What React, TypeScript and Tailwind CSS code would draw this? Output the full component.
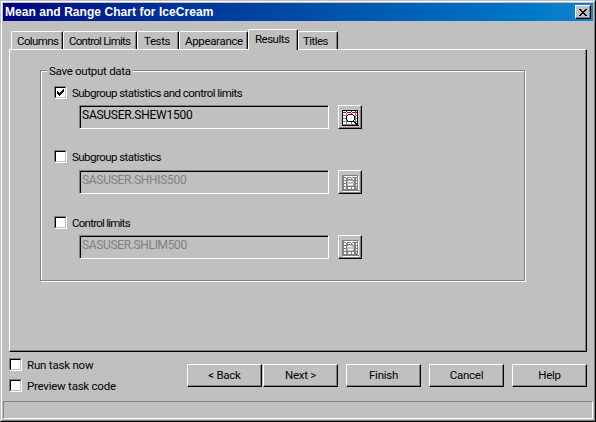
import React from "react";

const raised =
  "border border-t-white border-l-white border-r-black border-b-black shadow-[inset_-1px_-1px_0_#808080]";

function CheckMark() {
  return (
    <svg width="7" height="7" viewBox="0 0 7 7" shapeRendering="crispEdges">
      <path d="M0 2h1v3H0zM1 3h1v3H1zM2 4h1v3H2zM3 3h1v3H3zM4 2h1v3H4zM5 1h1v3H5zM6 0h1v3H6z" fill="#000" />
    </svg>
  );
}

function CheckBox({ checked = false, label, spacing }: { checked?: boolean; label: string; spacing: string }) {
  return (
    <div className="flex h-[13px] items-center">
      <div className="h-[13px] w-[13px] shrink-0 border border-t-[#808080] border-l-[#808080] border-r-white border-b-white">
        <div className="flex h-[11px] w-[11px] items-center justify-center border border-t-black border-l-black border-r-[#c0c0c0] border-b-[#c0c0c0] bg-white">
          {checked && <CheckMark />}
        </div>
      </div>
      <span className={"ml-[5px] pt-px " + spacing}>{label}</span>
    </div>
  );
}

function DataIcon({ disabled }: { disabled: boolean }) {
  const ink = disabled ? "#808080" : "#000";
  return (
    <svg width="17" height="17" viewBox="0 0 17 17" shapeRendering="crispEdges">
      {disabled && <path d="M1 16h16v1H1zM16 1h1v15h-1z" fill="#fff" />}
      <path d="M0 0h16v16H0z" fill={ink} />
      <path d="M1 1h14v14H1z" fill="#fff" />
      <path d="M1 2h3v1H1zM5 2h4v1H5zM10 2h5v1h-5z" fill={disabled ? "#808080" : "#b00018"} />
      {!disabled && <path d="M4 1h1v1H4zM9 1h1v1H9zM13 1h1v1h-1z" fill="#800010" />}
      <path d="M1 5h14v1H1zM1 8h14v1H1zM1 11h14v1H1zM1 14h14v1H1zM4 3h1v12H4zM9 3h1v12H9zM13 3h1v12h-1z" fill="#808080" />
      {disabled && <path d="M1 1h1v14H1zM5 3h1v12H5zM12 3h1v12h-1z" fill="#808080" />}
      <path d="M6 5h5v1h1v4h-1v1H6v-1H5V6h1z" fill={disabled ? "#c0c0c0" : "#fff"} />
      {disabled && <path d="M6 6h4v1H6zM6 9h5v1H6z" fill="#fff" />}
      <path
        d="M6 4h5v1H6zM5 5h1v1H5zM11 5h1v1h-1zM4 6h1v4H4zM12 6h1v4h-1zM5 10h1v1H5zM11 10h1v1h-1zM6 11h5v1H6zM11 11h2v1h-2zM12 12h2v1h-2zM13 13h2v1h-2zM14 14h2v1h-2zM15 15h2v1h-2z"
        fill={ink}
      />
    </svg>
  );
}

function DataRow({ value, disabled = false, spacing }: { value: string; disabled?: boolean; spacing: string }) {
  return (
    <div className="ml-[25px] flex h-6">
      <div className="h-6 w-[250px] border border-t-[#808080] border-l-[#808080] border-r-white border-b-white">
        <div
          className={
            "h-[22px] border-t border-l border-black pt-[2px] pl-px text-[12px] leading-[13px] " +
            spacing +
            (disabled ? " text-[#808080]" : " text-black")
          }
        >
          {value}
        </div>
      </div>
      <button className={"ml-[9px] h-6 w-6 pt-[3px] pl-[3px] " + raised}>
        <DataIcon disabled={disabled} />
      </button>
    </div>
  );
}

function Tab({ label, size, active = false }: { label: string; size: string; active?: boolean }) {
  return (
    <div
      className={
        "shrink-0 rounded-t-[2px] border border-b-0 border-t-white border-l-white border-r-black bg-[#c0c0c0] pt-[3px] shadow-[inset_-1px_0_0_#808080] " +
        size +
        (active ? " relative z-10 -mb-px h-[21px]" : " h-[18px]")
      }
    >
      {label}
    </div>
  );
}

function PushButton({ label, place }: { label: string; place: string }) {
  return (
    <button className={"h-[23px] w-[75px] shrink-0 pb-px text-center " + raised + " " + place}>{label}</button>
  );
}

export default function App() {
  return (
    <div className="flex h-[422px] w-[596px] flex-col overflow-hidden border border-t-[#c0c0c0] border-l-[#c0c0c0] border-r-black border-b-black bg-[#c0c0c0] font-[Roboto,'Liberation_Sans',Arial,sans-serif] text-[11.5px] leading-[13px] whitespace-nowrap text-black">
      <div className="flex h-[420px] flex-col border border-t-white border-l-white border-r-[#808080] border-b-[#808080] pt-px pl-px">
        <div className="flex h-[18px] w-[590px] shrink-0 items-center justify-between bg-linear-to-r from-[#000080] to-[#1084d0] pr-[2px] pl-[2px]">
          <span className="font-['Liberation_Sans',Arial,sans-serif] text-[12px] font-bold tracking-[0.05px] text-white">Mean and Range Chart for IceCream</span>
          <button className={"flex h-[14px] w-4 items-center justify-center bg-[#c0c0c0] pr-px " + raised}>
            <svg width="8" height="7" viewBox="0 0 8 7" shapeRendering="crispEdges">
              <path d="M0 0h2v1H0zM6 0h2v1H6zM1 1h2v1H1zM5 1h2v1H5zM2 2h4v1H2zM3 3h2v1H3zM2 4h4v1H2zM1 5h2v1H1zM5 5h2v1H5zM0 6h2v1H0zM6 6h2v1H6z" fill="#000" />
            </svg>
          </button>
        </div>

        <div className="flex h-7 shrink-0 items-end pl-2">
          <Tab label="Columns" size="w-[52px] pl-[5px] tracking-[-0.6px]" />
          <Tab label="Control Limits" size="w-[74px] pl-[5px] tracking-[-0.75px]" />
          <Tab label="Tests" size="w-[42px] pl-[6px] tracking-[-0.4px]" />
          <Tab label="Appearance" size="w-[69px] pl-[5px] tracking-[-0.33px]" />
          <Tab label="Results" size="w-[50px] pl-[6px] tracking-[-0.5px]" active />
          <Tab label="Titles" size="w-[40px] pl-[4px] tracking-[-0.55px]" />
        </div>

        <div className={"ml-[6px] h-[303px] w-[578px] shrink-0 pt-[20px] pl-[30px] " + raised}>
          <div className="h-[211px] w-[485px] border border-[#808080] shadow-[1px_1px_0_#fff,inset_1px_1px_0_#fff]">
            <div className="-mt-[6px] ml-[6px] h-[13px] w-[86px] bg-[#c0c0c0] pl-[2px] tracking-[-0.28px]">Save output data</div>
            <div className="mt-[8px] ml-[13px] flex flex-col">
              <CheckBox checked label="Subgroup statistics and control limits" spacing="tracking-[-0.54px]" />
              <div className="mt-[6px]">
                <DataRow value="SASUSER.SHEW1500" spacing="tracking-[-0.25px]" />
              </div>
              <div className="mt-[21px]">
                <CheckBox label="Subgroup statistics" spacing="tracking-[-0.54px]" />
              </div>
              <div className="mt-[7px]">
                <DataRow value="SASUSER.SHHIS500" disabled spacing="tracking-[-0.3px]" />
              </div>
              <div className="mt-[22px]">
                <CheckBox label="Control limits" spacing="tracking-[-0.75px]" />
              </div>
              <div className="mt-[6px]">
                <DataRow value="SASUSER.SHLIM500" disabled spacing="tracking-[-0.35px]" />
              </div>
            </div>
          </div>
        </div>

        <div className="flex h-[49px] shrink-0 pl-[6px]">
          <div className="flex w-[178px] shrink-0 flex-col gap-2 pt-[6px]">
            <CheckBox label="Run task now" spacing="tracking-[-0.2px]" />
            <CheckBox label="Preview task code" spacing="tracking-[-0.24px]" />
          </div>
          <div className="flex pt-3 tracking-[-0.28px]">
            <PushButton label="< Back" place="" />
            <PushButton label="Next >" place="ml-px" />
            <PushButton label="Finish" place="ml-2" />
            <PushButton label="Cancel" place="ml-2" />
            <PushButton label="Help" place="ml-2" />
          </div>
        </div>

        <div className="h-[18px] w-[590px] shrink-0 border border-t-[#808080] border-l-[#808080] border-r-white border-b-white" />
      </div>
    </div>
  );
}
